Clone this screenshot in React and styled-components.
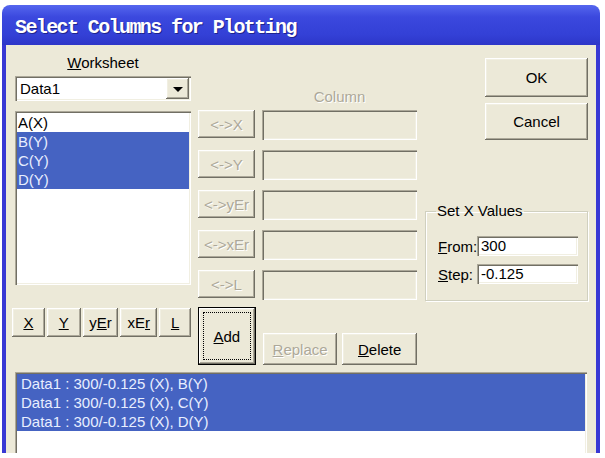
import styled, { createGlobalStyle } from 'styled-components';

const colors = {
  face: '#ECE9D8',
  shadow: '#ACA899',
  darkShadow: '#716F64',
  light: '#F1EFE2',
  frame: '#3838D4',
  select: '#4563C2',
  selectText: '#E8EEFF',
  disabled: '#ACA899',
};

const GlobalStyle = createGlobalStyle`
  html, body {
    margin: 0;
    padding: 0;
    background: #fff;
    overflow: hidden;
  }
  body {
    font-family: 'Liberation Sans', Arial, sans-serif;
  }
`;

const raised = `
  box-shadow: inset -1px -1px ${colors.darkShadow}, inset 1px 1px #fff,
    inset -2px -2px ${colors.shadow}, inset 2px 2px ${colors.light};
`;

const sunken = `
  box-shadow: inset 1px 1px ${colors.shadow}, inset 2px 2px ${colors.darkShadow},
    inset -1px -1px #fff, inset -2px -2px ${colors.light};
`;

const Window = styled.div`
  width: 598px;
  margin: 5px 0 0 2px;
`;

const TitleBar = styled.div`
  height: 40px;
  box-sizing: border-box;
  padding: 4px 0 0 13px;
  display: flex;
  align-items: center;
  border-radius: 8px 8px 0 0;
  background: linear-gradient(180deg, #5566EE 0%, #3B48DE 30%, #3340D6 75%, #2D36C8 100%);
  color: #fff;
  font-family: 'Liberation Mono', 'Courier New', monospace;
  font-weight: 700;
  font-size: 20px;
  letter-spacing: -1.6px;
  text-shadow: 1px 1px #1E248C;
`;

const Body = styled.div`
  height: 408px;
  overflow: hidden;
  background: ${colors.face};
  border-left: 4px solid ${colors.frame};
  border-right: 4px solid ${colors.frame};
  font-size: 15px;
`;

const Top = styled.div`
  display: flex;
  height: 320px;
`;

const LeftCol = styled.div`
  width: 176px;
  margin-left: 9px;
  padding-top: 9px;
  display: flex;
  flex-direction: column;
`;

const Label = styled.div`
  height: 18px;
  line-height: 18px;
  text-align: center;
  color: ${p => (p.$disabled ? colors.disabled : '#000')};
  text-shadow: ${p => (p.$disabled ? '1px 1px #fff' : 'none')};
`;

const Combo = styled.div`
  box-sizing: border-box;
  height: 25px;
  margin-top: 4px;
  padding: 2px 2px 2px 5px;
  display: flex;
  align-items: center;
  justify-content: space-between;
  background: #fff;
  ${sunken}
`;

const ComboButton = styled.div`
  box-sizing: border-box;
  width: 23px;
  height: 21px;
  display: flex;
  align-items: center;
  justify-content: center;
  background: ${colors.face};
  ${raised}

  &::after {
    content: '';
    border-left: 5px solid transparent;
    border-right: 5px solid transparent;
    border-top: 5px solid #000;
    margin-top: 1px;
  }
`;

const ListBox = styled.div`
  box-sizing: border-box;
  height: ${p => p.$h}px;
  margin-top: ${p => p.$mt}px;
  padding: 2px;
  background: #fff;
  overflow: hidden;
  ${sunken}
`;

const Item = styled.div`
  height: 19px;
  line-height: 19px;
  padding-left: ${p => p.$pl}px;
  white-space: nowrap;
  background: ${p => (p.$selected ? colors.select : 'transparent')};
  color: ${p => (p.$selected ? colors.selectText : '#000')};
`;

const TypeRow = styled.div`
  display: flex;
  gap: 2px;
  margin: 23px 0 0 -3px;
`;

const Button = styled.button`
  box-sizing: border-box;
  width: ${p => p.$w}px;
  height: ${p => p.$h}px;
  padding: 0;
  border: none;
  background: ${colors.face};
  font-family: 'Liberation Sans', Arial, sans-serif;
  font-size: 15px;
  color: ${p => (p.disabled ? colors.disabled : '#000')};
  text-shadow: ${p => (p.disabled ? '1px 1px #fff' : 'none')};
  ${raised}
`;

const DefaultButton = styled(Button)`
  border: 1px solid #000;
  padding: 4px;
`;

const FocusRect = styled.span`
  display: flex;
  align-items: center;
  justify-content: center;
  height: 100%;
  box-sizing: border-box;
  border: 1px dotted #000;
`;

const MidCol = styled.div`
  width: 219px;
  margin-left: 7px;
  padding-top: 44px;
  display: flex;
  flex-direction: column;
`;

const ColumnLabel = styled(Label)`
  height: 16px;
  line-height: 16px;
  margin-left: 64px;
`;

const AssignRows = styled.div`
  display: flex;
  flex-direction: column;
  gap: 10px;
  margin-top: 5px;
`;

const AssignRow = styled.div`
  display: flex;
  align-items: flex-start;
  gap: 7px;
`;

const Field = styled.div`
  box-sizing: border-box;
  width: ${p => p.$w}px;
  height: ${p => p.$h}px;
  padding: 0 4px;
  line-height: ${p => p.$h}px;
  background: ${p => (p.$white ? '#fff' : colors.face)};
  ${sunken}
`;

const ActionRow = styled.div`
  display: flex;
  align-items: flex-end;
  margin-top: 7px;

  & > :nth-child(2) {
    margin-left: 7px;
  }
  & > :nth-child(3) {
    margin-left: 5px;
  }
`;

const RightCol = styled.div`
  width: 163px;
  margin-left: 8px;
  padding-top: 13px;
  display: flex;
  flex-direction: column;
  align-items: flex-end;
`;

const GroupBox = styled.fieldset`
  box-sizing: border-box;
  width: 163px;
  margin: 63px 0 0;
  padding: 0 0 16px 12px;
  border: 1px solid #D0D0BF;
  box-shadow: inset 1px 1px #fff, 1px 1px #fff;
  align-self: stretch;
`;

const Legend = styled.legend`
  padding: 0 1px;
  margin-left: -2px;
  line-height: 16px;
`;

const FormRow = styled.div`
  display: flex;
  align-items: center;
  margin-top: ${p => p.$mt}px;
`;

const FormLabel = styled.span`
  width: 39px;
`;

const Bottom = styled(ListBox)`
  width: 572px;
  margin-left: 9px;
`;

const worksheetCols = [
  { name: 'A(X)', selected: false },
  { name: 'B(Y)', selected: true },
  { name: 'C(Y)', selected: true },
  { name: 'D(Y)', selected: true },
];

const assigns = ['<->X', '<->Y', '<->yEr', '<->xEr', '<->L'];

const plots = ['B(Y)', 'C(Y)', 'D(Y)'];

export default function App() {
  return (
    <>
      <GlobalStyle />
      <Window>
        <TitleBar>Select Columns for Plotting</TitleBar>
        <Body>
          <Top>
            <LeftCol>
              <Label><u>W</u>orksheet</Label>
              <Combo>
                Data1
                <ComboButton />
              </Combo>
              <ListBox $h={174} $mt={10}>
                {worksheetCols.map(c => (
                  <Item key={c.name} $pl={1} $selected={c.selected}>{c.name}</Item>
                ))}
              </ListBox>
              <TypeRow>
                <Button $w={33} $h={29}><u>X</u></Button>
                <Button $w={34} $h={29}><u>Y</u></Button>
                <Button $w={36} $h={29}>y<u>E</u>r</Button>
                <Button $w={37} $h={29}>xE<u>r</u></Button>
                <Button $w={32} $h={29}><u>L</u></Button>
              </TypeRow>
            </LeftCol>

            <MidCol>
              <ColumnLabel $disabled>Column</ColumnLabel>
              <AssignRows>
                {assigns.map(a => (
                  <AssignRow key={a}>
                    <Button $w={57} $h={28} disabled>{a}</Button>
                    <Field $w={155} $h={30} />
                  </AssignRow>
                ))}
              </AssignRows>
              <ActionRow>
                <DefaultButton $w={58} $h={58}>
                  <FocusRect><u>A</u>dd</FocusRect>
                </DefaultButton>
                <Button $w={75} $h={32} disabled><u>R</u>eplace</Button>
                <Button $w={75} $h={32}><u>D</u>elete</Button>
              </ActionRow>
            </MidCol>

            <RightCol>
              <Button $w={103} $h={39}>OK</Button>
              <Button $w={103} $h={37} style={{ marginTop: 6 }}>Cancel</Button>
              <GroupBox>
                <Legend>Set X Values</Legend>
                <FormRow $mt={17}>
                  <FormLabel><u>F</u>rom:</FormLabel>
                  <Field $w={101} $h={20} $white>300</Field>
                </FormRow>
                <FormRow $mt={8}>
                  <FormLabel><u>S</u>tep:</FormLabel>
                  <Field $w={101} $h={20} $white>-0.125</Field>
                </FormRow>
              </GroupBox>
            </RightCol>
          </Top>

          <Bottom $h={100} $mt={7}>
            {plots.map(p => (
              <Item key={p} $pl={4} $selected>Data1 : 300/-0.125 (X), {p}</Item>
            ))}
          </Bottom>
        </Body>
      </Window>
    </>
  );
}
